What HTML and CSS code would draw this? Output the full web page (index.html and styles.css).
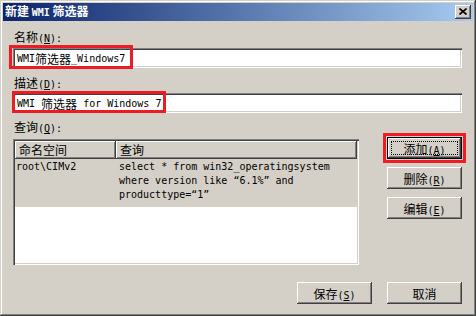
FILE: index.html
```html
<!DOCTYPE html>
<html lang="zh-CN">
<head>
  <meta charset="UTF-8">
  <title>新建 WMI 筛选器</title>
  <link rel="stylesheet" href="styles.css">
</head>
<body>

  <!-- window frame -->
  <div class="window">

    <!-- title bar -->
    <div class="titlebar">
      <span class="title">新建 <span class="m">WMI</span> 筛选器</span>
      <button class="close-btn" title="关闭">
        <svg width="8" height="7" viewBox="0 0 8 7">
          <path d="M0.5 0.5 L7.5 6.5 M7.5 0.5 L0.5 6.5" stroke="#000" stroke-width="1.6" fill="none"/>
        </svg>
      </button>
    </div>

    <!-- dialog body -->
    <div class="content">
      <div class="label label-first">名称<span class="m">(<u>N</u>):</span></div>
      <div class="field-wrap">
        <div class="field"><span class="m">WMI</span><span class="c">筛选器</span><span class="m">_Windows7</span></div>
        <div class="mark mark-name"></div>
      </div>

      <div class="label label-gap">描述<span class="m">(<u>D</u>):</span></div>
      <div class="field-wrap">
        <div class="field"><span class="m">WMI </span><span class="c">筛选器</span><span class="m"> for Windows 7</span></div>
        <div class="mark mark-desc"></div>
      </div>

      <div class="label label-gap2">查询<span class="m">(<u>Q</u>):</span></div>
      <div class="main">
        <div class="list">
          <div class="list-head">
            <div class="head-item col1">命名空间</div>
            <div class="head-item col2">查询</div>
          </div>
          <div class="list-row">
            <div class="col1 m">root\CIMv2</div>
            <div class="col2 m">select * from win32_operatingsystem<br>where version like “6.1%” and<br>producttype=“1”</div>
          </div>
        </div>

        <div class="side">
          <div class="btn-wrap">
            <button class="btn default">添加<span class="m">(<u>A</u>)</span></button>
            <div class="mark mark-add"></div>
          </div>
          <button class="btn">删除<span class="m">(<u>R</u>)</span></button>
          <button class="btn">编辑<span class="m">(<u>E</u>)</span></button>
        </div>
      </div>

      <div class="footer">
        <button class="btn">保存<span class="m">(<u>S</u>)</span></button>
        <button class="btn">取消</button>
      </div>
    </div>
  </div>

</body>
</html>
```

FILE: styles.css
```css
/* Page */
html, body {
  margin: 0;
  padding: 0;
}
body {
  width: 476px;
  height: 316px;
  overflow: hidden;
  background: #d4d0c8;
  font-family: "Noto Sans CJK SC", sans-serif;
  font-size: 12px;
  color: #000;
}

/* half-width latin runs, like the old bitmap font */
.m {
  font-family: "DejaVu Sans Mono", "Noto Sans CJK SC", monospace;
  font-size: 10px;
}
.c {
  font-family: "Noto Sans CJK SC", sans-serif;
  font-size: 12px;
}

/* Window frame */
.window {
  box-sizing: border-box;
  width: 476px;
  height: 316px;
  padding: 3px;
  background: #d4d0c8;
  box-shadow: inset -1px -1px #404040, inset 1px 1px #d4d0c8,
              inset -2px -2px #808080, inset 2px 2px #fff;
  display: flex;
  flex-direction: column;
}

/* Title bar */
.titlebar {
  height: 18px;
  background: linear-gradient(to right, #0a246a, #a6caf0);
  display: flex;
  align-items: center;
  justify-content: space-between;
  padding: 0 2px;
}
.title {
  color: #fff;
  font-weight: bold;
  line-height: 18px;
}
.close-btn {
  width: 16px;
  height: 14px;
  padding: 0;
  border: 0;
  background: #d4d0c8;
  box-shadow: inset -1px -1px #404040, inset 1px 1px #fff,
              inset -2px -2px #808080, inset 2px 2px #d4d0c8;
  display: flex;
  align-items: center;
  justify-content: center;
}
.close-btn svg {
  display: block;
  margin: 0 0 1px 0;
}

/* Body */
.content {
  padding: 8px 11px 0 10px;
  display: flex;
  flex-direction: column;
}
.label {
  line-height: 16px;
  height: 16px;
  padding-left: 1px;
}
.label-gap  { margin-top: 7px; }
.label-gap2 { margin-top: 6px; }

/* Text boxes */
.field-wrap {
  position: relative;
  margin-top: 3px;
}
.label-gap + .field-wrap { margin-top: 2px; }
.field {
  box-sizing: border-box;
  height: 20px;
  background: #fff;
  padding: 0 4px;
  display: flex;
  align-items: center;
  white-space: pre;
  box-shadow: inset 1px 1px #808080, inset 2px 2px #404040,
              inset -1px -1px #fff, inset -2px -2px #d4d0c8;
}

/* Red annotation boxes */
.mark {
  position: absolute;
  border: 3px solid #ed1c24;
  box-sizing: border-box;
  pointer-events: none;
}
.mark-name { left: -4px; top: -3px; width: 124px; height: 24px; }
.mark-desc { left: -1px; top: -2px; width: 154px; height: 22px; }
.mark-add  { left: -4px; top: -4px; right: -4px; bottom: -4px; }

/* List + side buttons */
.main {
  display: flex;
  margin-top: 2px;
}
.list {
  box-sizing: border-box;
  width: 346px;
  height: 126px;
  margin-top: 2px;
  padding: 2px;
  background: #fff;
  box-shadow: inset 1px 1px #808080, inset 2px 2px #404040,
              inset -1px -1px #fff, inset -2px -2px #d4d0c8;
}
.list-head {
  display: flex;
  height: 18px;
}
.head-item {
  box-sizing: border-box;
  background: #d4d0c8;
  line-height: 18px;
  padding-left: 4px;
  box-shadow: inset -1px -1px #404040, inset 1px 1px #fff,
              inset -2px -2px #808080;
}
.col1 { width: 101px; flex: none; }
.col2 { flex: 1; }
.list-row {
  display: flex;
  background: #d4d0c8;
  height: 48px;
  box-sizing: border-box;
  padding-top: 1px;
  line-height: 14px;
}
.list-row .col1 { padding-left: 1px; box-sizing: border-box; }
.list-row .col2 { padding-left: 3px; }

.side {
  margin-left: auto;
  display: flex;
  flex-direction: column;
  gap: 8px;
}
.btn-wrap { position: relative; }

/* Buttons */
.btn {
  box-sizing: border-box;
  width: 75px;
  height: 22px;
  padding: 0;
  border: 0;
  background: #d4d0c8;
  font-family: "Noto Sans CJK SC", sans-serif;
  font-size: 12px;
  color: #000;
  box-shadow: inset -1px -1px #404040, inset 1px 1px #fff,
              inset -2px -2px #808080, inset 2px 2px #d4d0c8;
}
.btn.default {
  display: block;
  border: 1px solid #000;
  outline: 1px dotted #000;
  outline-offset: -5px;
}

/* Footer */
.footer {
  display: flex;
  justify-content: flex-end;
  gap: 15px;
  margin-top: 17px;
}
```
